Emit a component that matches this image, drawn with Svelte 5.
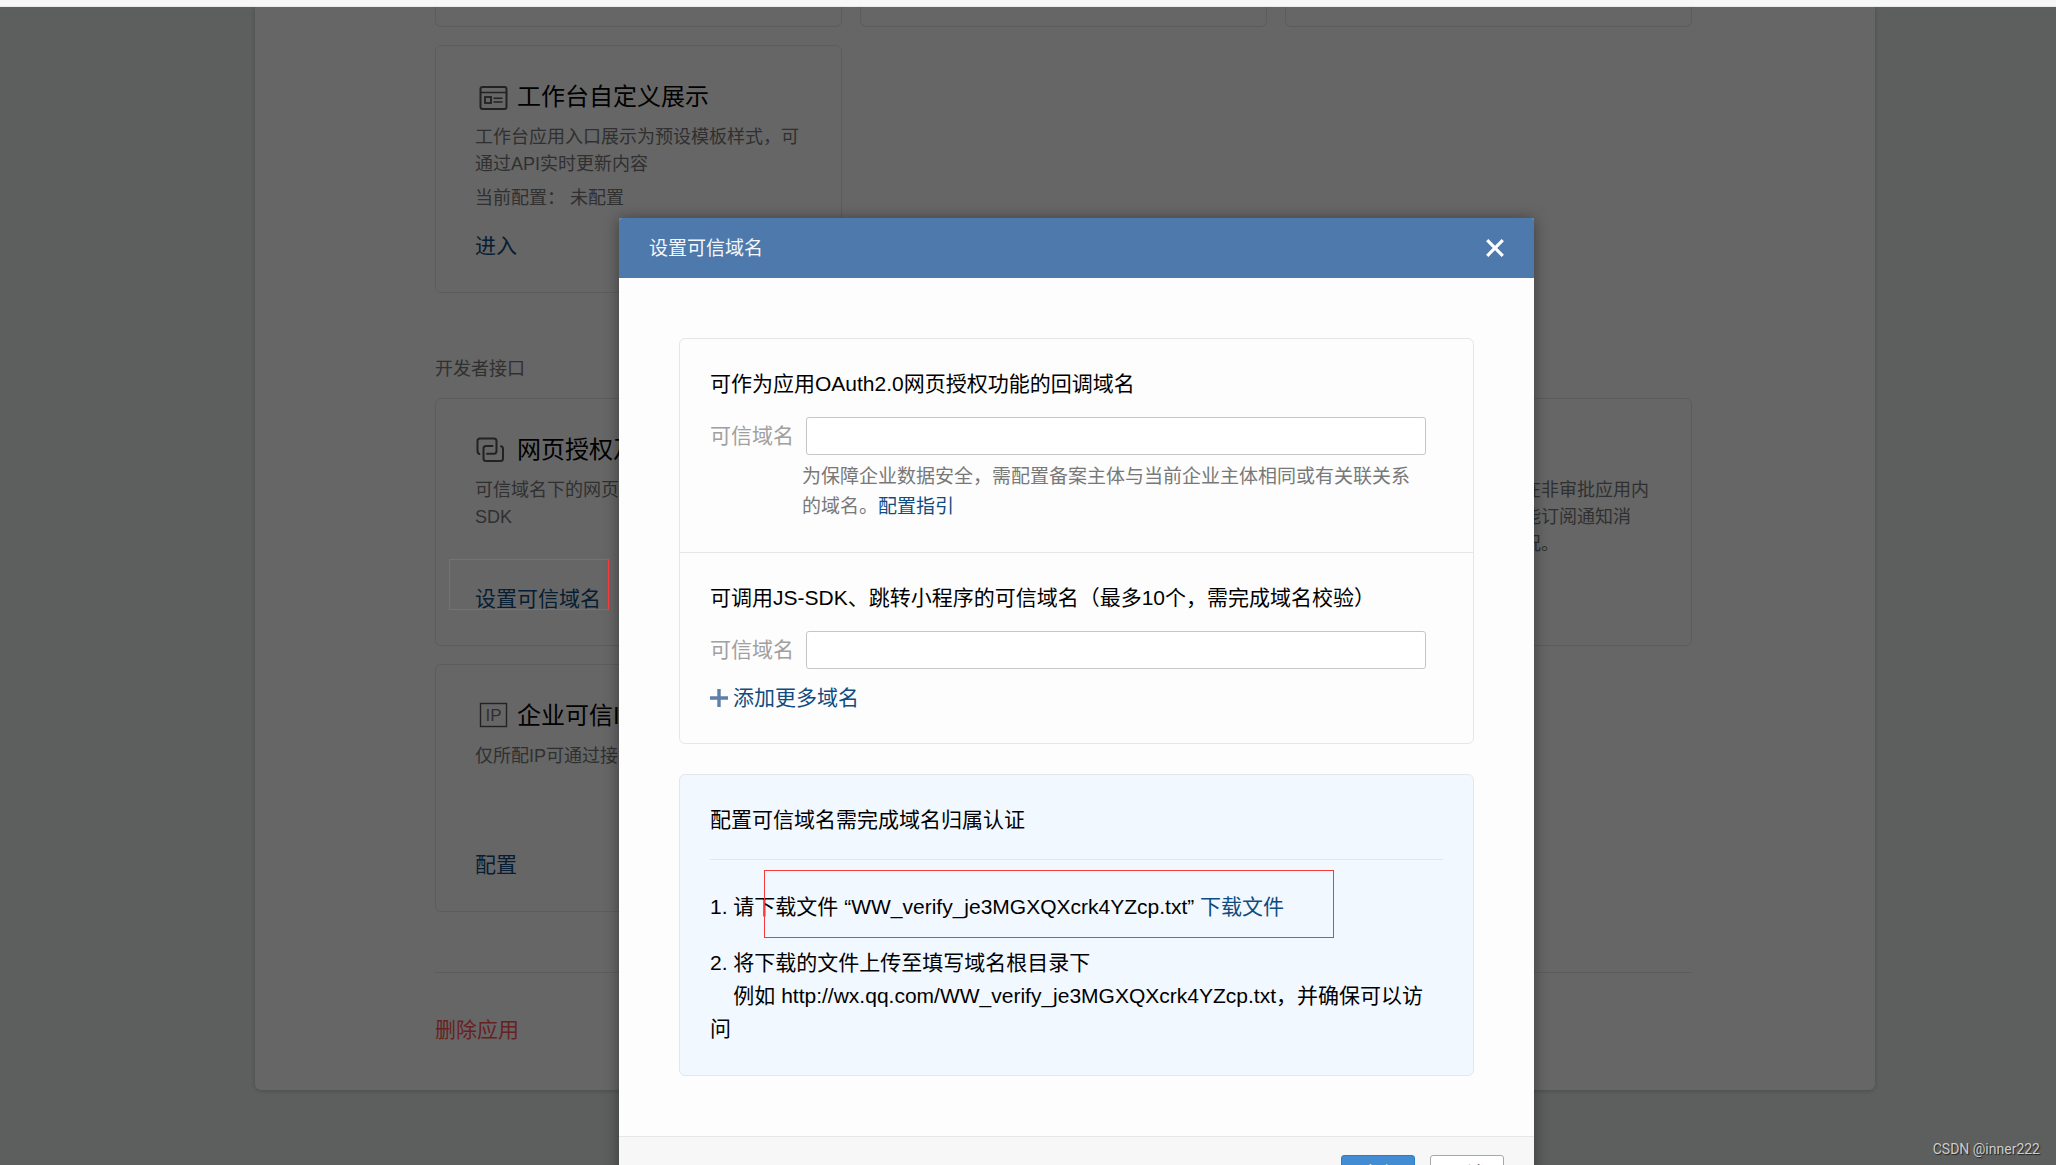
<script lang="ts">
	interface ApiCard {
		id: string;
		icon?: 'link' | 'ip';
		title?: string;
		desc: string;
		action?: string;
	}

	const apiCards: ApiCard[] = [
		{
			id: 'web-auth',
			icon: 'link',
			title: '网页授权及JS-SDK',
			desc: '可信域名下的网页可使用网页授权及JS-SDK',
			action: '设置可信域名'
		},
		{
			id: 'approval',
			desc: '支持调用审批流程引擎，在非审批应用内\n使用审批流程，开启后才能订阅通知消\n息并及时了解审批流转情况。'
		},
		{
			id: 'trusted-ip',
			icon: 'ip',
			title: '企业可信IP',
			desc: '仅所配IP可通过接口获取企业数据',
			action: '配置'
		}
	];

	const verifyFile = 'WW_verify_je3MGXQXcrk4YZcp.txt';

	let oauthDomain = $state('');
	let sdkDomains = $state(['']);
	let open = $state(true);

	function addDomain() {
		if (sdkDomains.length < 10) {
			sdkDomains.push('');
		}
	}

	function close() {
		open = false;
	}
</script>

<div class="app">
	<div class="topbar"></div>

	<div class="stage">
		<main class="sheet">
			<div class="grid">
				<div class="card-tail"></div>
				<div class="card-tail"></div>
				<div class="card-tail"></div>

				<section class="card">
					<h3 class="card-title">
						<svg class="card-icon" viewBox="0 0 36 36" fill="none" stroke="#555" stroke-width="2" aria-hidden="true">
							<rect x="5.5" y="8" width="26" height="22" rx="2" />
							<path d="M5.5 13.5h26" stroke-width="1.5" />
							<rect x="10" y="18" width="6" height="6" stroke-width="1.8" />
							<path d="M18.5 19.3h9M18.5 23h9" stroke-width="1.5" />
						</svg>
						工作台自定义展示
					</h3>
					<p class="card-desc">工作台应用入口展示为预设模板样式，可通过API实时更新内容</p>
					<p class="card-status">当前配置： 未配置</p>
					<a class="card-action" href="#enter">进入</a>
				</section>
			</div>

			<h2 class="section-title">开发者接口</h2>

			<div class="grid">
				{#each apiCards as card (card.id)}
					<section class="card {card.id}">
						<h3 class="card-title">
							{#if card.icon === 'link'}
								<svg class="card-icon" viewBox="0 0 36 36" fill="none" stroke="#555" stroke-width="2" stroke-linecap="round" aria-hidden="true">
									<path d="M4.5 22Q2.5 21.5 2.5 19V9Q2.5 6.5 5 6.5H19Q21.5 6.5 21.5 9V19Q21.5 21.7 19 21.7H12" />
									<path d="M17.5 14H11Q8.5 14 8.5 16.5V26.5Q8.5 29 11 29H25.5Q28 29 28 26.5V17Q28 14.6 26 14.2" />
								</svg>
							{:else if card.icon === 'ip'}
								<svg class="card-icon" viewBox="0 0 36 36" fill="none" aria-hidden="true">
									<rect x="5.5" y="5.5" width="26" height="23" stroke="#555" stroke-width="1.4" />
									<text x="18.5" y="23" text-anchor="middle" font-size="17" fill="#777">IP</text>
								</svg>
							{/if}
							{card.title ?? ''}
						</h3>
						<p class="card-desc">{card.desc}</p>
						{#if card.action}
							<a class="card-action" href="#{card.id}">{card.action}</a>
						{/if}
					</section>
				{/each}
			</div>

			<div class="sheet-footer">
				<a class="delete" href="#delete">删除应用</a>
			</div>
		</main>

		{#if open}
			<div class="overlay">
				<div class="dialog" role="dialog" aria-modal="true" aria-labelledby="dialog-title">
					<header class="dialog-head">
						<h2 id="dialog-title">设置可信域名</h2>
						<button class="close" type="button" aria-label="关闭" onclick={close}>
							<svg width="18" height="18" viewBox="0 0 18 18" stroke="#fff" stroke-width="3.2" aria-hidden="true">
								<path d="M1.2 1.2l15.6 15.6M16.8 1.2L1.2 16.8" />
							</svg>
						</button>
					</header>

					<div class="dialog-body">
						<div class="panel">
							<section class="panel-part">
								<h3>可作为应用OAuth2.0网页授权功能的回调域名</h3>
								<div class="field">
									<label for="oauth-domain">可信域名</label>
									<input id="oauth-domain" type="text" bind:value={oauthDomain} />
								</div>
								<p class="hint">
									为保障企业数据安全，需配置备案主体与当前企业主体相同或有关联关系的域名。<a href="#guide">配置指引</a>
								</p>
							</section>

							<section class="panel-part">
								<h3>可调用JS-SDK、跳转小程序的可信域名（最多10个，需完成域名校验）</h3>
								{#each sdkDomains as _, i}
									<div class="field">
										<label for="sdk-domain-{i}">可信域名</label>
										<input id="sdk-domain-{i}" type="text" bind:value={sdkDomains[i]} />
									</div>
								{/each}
								<button class="add" type="button" onclick={addDomain}>
									<svg width="18" height="18" viewBox="0 0 18 18" stroke="#5d80aa" stroke-width="3.4" aria-hidden="true">
										<path d="M9 0v18M0 9h18" />
									</svg>
									添加更多域名
								</button>
							</section>
						</div>

						<section class="verify">
							<h3>配置可信域名需完成域名归属认证</h3>
							<div class="steps">
								<p class="step marked">1. 请下载文件 “{verifyFile}” <a href="#download">下载文件</a></p>
								<p class="step">
									2. 将下载的文件上传至填写域名根目录下<br />&nbsp;&nbsp;&nbsp;&nbsp;例如 http://wx.qq.com/{verifyFile}，并确保可以访问
								</p>
							</div>
						</section>
					</div>

					<footer class="dialog-foot">
						<button class="btn primary" type="button">确定</button>
						<button class="btn" type="button" onclick={close}>取消</button>
					</footer>
				</div>
			</div>
		{/if}

		<div class="link-mark"></div>
		<span class="watermark">CSDN @inner222</span>
	</div>
</div>

<style>
	:global(body) {
		margin: 0;
	}

	.app {
		display: flex;
		flex-direction: column;
		height: 100vh;
		overflow: hidden;
		font-family: 'Liberation Sans', 'Noto Sans CJK SC', sans-serif;
		font-size: 21px;
		color: #000;
	}

	h2,
	h3,
	p {
		margin: 0;
		font-weight: 400;
	}

	a {
		color: #0f4c81;
		text-decoration: none;
	}

	button,
	input {
		font: inherit;
	}

	.topbar {
		flex: none;
		height: 6px;
		background: #f7f7f7;
		border-bottom: 1px solid #e6eaec;
	}

	.stage {
		position: relative;
		flex: 1;
		min-height: 0;
		overflow: hidden;
		padding: 0 181px 0 255px;
		background: #e6ede9;
	}

	/* App settings page */
	.sheet {
		padding: 0 183px 45px 180px;
		background: #fff;
		border-radius: 0 0 6px 6px;
		box-shadow: 0 1px 4px rgba(0, 0, 0, 0.2);
	}

	.grid {
		display: grid;
		grid-template-columns: repeat(3, 1fr);
		gap: 18px;
	}

	.card-tail {
		box-sizing: border-box;
		height: 20px;
		border: 1px solid #e4e6e9;
		border-top: 0;
		border-radius: 0 0 6px 6px;
	}

	.card {
		box-sizing: border-box;
		display: flex;
		flex-direction: column;
		min-height: 248px;
		padding: 33px 39px 31px;
		border: 1px solid #e4e6e9;
		border-radius: 6px;
	}

	.card.approval {
		grid-column: 3;
	}

	.card-title {
		display: flex;
		align-items: center;
		gap: 6px;
		height: 36px;
		font-size: 24px;
		line-height: 36px;
		white-space: nowrap;
	}

	.card-icon {
		flex: none;
		width: 36px;
		height: 36px;
	}

	.card-desc,
	.card-status {
		font-size: 18px;
		line-height: 27px;
		color: #787878;
		white-space: pre-line;
	}

	.card-desc {
		margin-top: 9px;
	}

	.card-status {
		margin-top: 7px;
	}

	.card-action {
		align-self: flex-start;
		margin-top: auto;
		line-height: 30px;
	}

	.section-title {
		padding: 63px 0 15px;
		font-size: 18px;
		line-height: 27px;
		color: #787878;
	}

	.sheet-footer {
		margin-top: 60px;
		padding-top: 42px;
		border-top: 1px solid #e4e6e9;
		line-height: 30px;
	}

	.delete {
		color: #f55;
	}

	/* Dialog */
	.overlay {
		position: absolute;
		inset: 0;
		display: flex;
		justify-content: center;
		align-items: flex-start;
		padding: 211px 0 0 97px;
		background: rgba(0, 0, 0, 0.6);
	}

	.dialog {
		width: 915px;
		background: #fdfdfd;
		border-radius: 3px;
		box-shadow: 0 1px 15px rgba(0, 0, 0, 0.4);
		overflow: hidden;
	}

	.dialog-head {
		display: flex;
		align-items: center;
		justify-content: space-between;
		height: 60px;
		padding: 0 30px;
		background: #4e79ad;
		color: #f4f7fa;
	}

	.dialog-head h2 {
		font-size: 19px;
		line-height: 32px;
		padding-top: 2px;
	}

	.close {
		display: flex;
		padding: 0;
		border: 0;
		background: none;
		cursor: pointer;
	}

	.dialog-body {
		display: flex;
		flex-direction: column;
		gap: 30px;
		padding: 60px;
		line-height: 30px;
	}

	.dialog-body h3 {
		font-size: 21px;
	}

	.panel {
		border: 1px solid #e4e6e9;
		border-radius: 6px;
	}

	.panel-part {
		padding: 30px;
	}

	.panel-part + .panel-part {
		border-top: 1px solid #e4e6e9;
	}

	.field {
		display: flex;
		align-items: center;
		gap: 12px;
		margin-top: 18px;
		padding-right: 17px;
	}

	.field label {
		flex: none;
		color: #a0a0a0;
	}

	.field input {
		box-sizing: border-box;
		flex: 1;
		min-width: 0;
		height: 38px;
		padding: 0 10px;
		border: 1px solid #c4c6c9;
		border-radius: 3px;
		background: #fff;
		outline: none;
	}

	.hint {
		margin-top: 7px;
		padding: 0 17px 0 92px;
		font-size: 19px;
		color: #787878;
	}

	.add {
		display: flex;
		align-items: center;
		gap: 5px;
		margin-top: 14px;
		padding: 0;
		border: 0;
		background: none;
		line-height: 30px;
		color: #0f4c81;
		cursor: pointer;
	}

	.verify {
		padding: 30px;
		border: 1px solid #e4e6e9;
		border-radius: 6px;
		background: #f1f8ff;
	}

	.verify h3 {
		padding-bottom: 24px;
		border-bottom: 1px solid #e4e6e9;
	}

	.steps {
		display: flex;
		flex-direction: column;
		gap: 23px;
		padding-top: 30px;
		line-height: 33px;
	}

	.marked {
		position: relative;
	}

	.marked::after {
		content: '';
		position: absolute;
		top: -20px;
		left: 54px;
		box-sizing: border-box;
		width: 570px;
		height: 68px;
		border: 1px solid #f83a3a;
		pointer-events: none;
	}

	.dialog-foot {
		display: flex;
		justify-content: flex-end;
		gap: 15px;
		padding: 18px 30px;
		border-top: 1px solid #e4e6e9;
		background: #f7f7f7;
	}

	.btn {
		box-sizing: border-box;
		width: 74px;
		height: 38px;
		padding: 0;
		border: 1px solid #a5a7aa;
		border-radius: 3px;
		background: #fff;
		font-size: 18px;
		line-height: 36px;
		color: #333;
		cursor: pointer;
	}

	.btn.primary {
		border-color: #2a80c8;
		background: #428cd4;
		color: #fff;
	}

	.link-mark {
		position: absolute;
		top: 552px;
		left: 449px;
		box-sizing: border-box;
		width: 160px;
		height: 51px;
		border: 1px solid #f83a3a;
		pointer-events: none;
	}

	.watermark {
		position: absolute;
		right: 16px;
		bottom: 6px;
		font-family: Roboto, sans-serif;
		font-size: 14px;
		line-height: 20px;
		color: #ccc;
		text-shadow: 1px 1px 1px #222;
	}
</style>
